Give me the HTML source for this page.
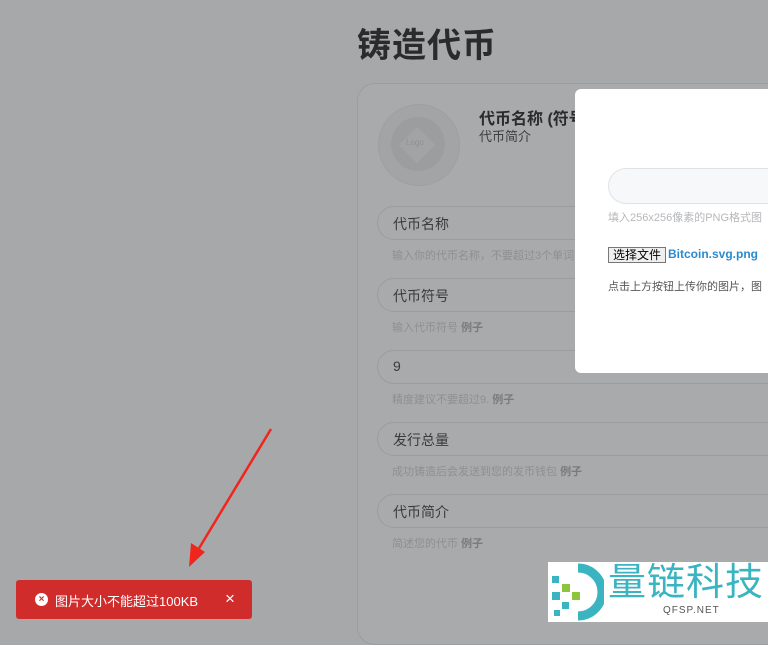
<!DOCTYPE html><html><head><meta charset="utf-8"><style>
body{margin:0;width:768px;height:622px;overflow:hidden;background:#a7a8aa;font-family:"Liberation Sans","Noto Sans CJK SC",sans-serif;position:relative}
.a{position:absolute}
h1{position:absolute;left:357px;top:18px;margin:0;font-size:34px;font-weight:bold;color:#2a2b2d;letter-spacing:1px}
.card{left:357px;top:83px;width:430px;height:560px;border:1px solid #9c9d9f;border-radius:18px;background:#a9aaac}
.inp{position:absolute;left:377px;width:420px;height:34px;border:1px solid #9b9c9e;border-radius:18px;background:#a9aaac;font-size:14px;color:#3a3b3d;box-sizing:border-box;padding:7px 15px}
.hint{position:absolute;left:392px;font-size:11px;color:#8e8f91}
.hint b{color:#7a7b7d}
.modal{left:575px;top:89px;width:200px;height:284px;background:#fff;border-radius:6px}
.toast{left:16px;top:580px;width:236px;height:39px;background:#d12c2c;border-radius:3px;color:#fff;font-size:13px}
</style></head><body>
<h1>铸造代币</h1>
<div class="a card"></div>
<div class="a" style="left:378px;top:104px;width:80px;height:80px;border-radius:50%;background:#a3a4a6;border:1px solid #9e9fa1"></div>
<div class="a" style="left:391px;top:117px;width:54px;height:54px;border-radius:50%;background:#9c9d9f"></div>
<div class="a" style="left:404px;top:132px;width:26px;height:26px;background:#a2a3a5;transform:rotate(45deg)"></div>
<div class="a" style="left:406px;top:138px;font-size:8px;color:#8f9092">Logo</div>
<div class="a" style="left:479px;top:105px;font-size:16px;font-weight:bold;color:#2a2b2d">代币名称 (符号)</div>
<div class="a" style="left:479px;top:126px;font-size:13px;color:#3e3f41">代币简介</div>
<div class="inp" style="top:206px">代币名称</div>
<div class="hint" style="top:247px">输入你的代币名称，不要超过3个单词</div>
<div class="inp" style="top:278px">代币符号</div>
<div class="hint" style="top:319px">输入代币符号 <b>例子</b></div>
<div class="inp" style="top:350px">9</div>
<div class="hint" style="top:391px">精度建议不要超过9. <b>例子</b></div>
<div class="inp" style="top:422px">发行总量</div>
<div class="hint" style="top:463px">成功铸造后会发送到您的发币钱包 <b>例子</b></div>
<div class="inp" style="top:494px">代币简介</div>
<div class="hint" style="top:535px">简述您的代币 <b>例子</b></div>
<div class="a modal"></div>
<div class="a" style="left:608px;top:168px;width:180px;height:34px;border:1px solid #dfe3e8;border-radius:18px;background:#f7f8fa"></div>
<div class="a" style="left:608px;top:209px;font-size:11px;color:#b5b7ba;white-space:nowrap">填入256x256像素的PNG格式图</div>
<div class="a" style="left:608px;top:247px;font-size:12px;border:1px solid #777;background:#efefef;padding:0 4px;line-height:14px">选择文件</div>
<div class="a" style="left:668px;top:247px;font-size:12px;font-weight:bold;color:#2a8ad0">Bitcoin.svg.png</div>
<div class="a" style="left:608px;top:278px;font-size:11px;color:#555;white-space:nowrap">点击上方按钮上传你的图片，图</div>
<svg class="a" style="left:185px;top:425px" width="90" height="145"><line x1="86" y1="4" x2="10" y2="130" stroke="#f0261e" stroke-width="2.5"/><polygon points="4,142 6,118 20,127" fill="#f0261e"/></svg>
<div class="a toast"><div class="a" style="left:19px;top:13px;width:13px;height:13px;border-radius:50%;background:#fff;color:#d12c2c;font-size:10px;font-weight:bold;text-align:center;line-height:13px">×</div><div class="a" style="left:39px;top:11px">图片大小不能超过100KB</div><div class="a" style="left:209px;top:9px;font-size:17px">×</div></div>
<div class="a" style="left:548px;top:562px;width:220px;height:60px;background:#fff"></div>
<svg class="a" style="left:548px;top:562px" width="56" height="60"><path d="M30 6 A24 24 0 1 1 30 54" fill="none" stroke="#3bb4c1" stroke-width="9"/><rect x="4" y="14" width="7" height="7" fill="#3bb4c1"/><rect x="14" y="22" width="8" height="8" fill="#8cc63f"/><rect x="4" y="30" width="8" height="8" fill="#3bb4c1"/><rect x="24" y="30" width="8" height="8" fill="#8cc63f"/><rect x="14" y="40" width="7" height="7" fill="#3bb4c1"/><rect x="6" y="48" width="6" height="6" fill="#3bb4c1"/></svg>
<div class="a" style="left:608px;top:561px;font-size:38px;color:#3bb4c1;letter-spacing:1px;line-height:44px">量链科技</div>
<div class="a" style="left:663px;top:605px;font-size:10px;color:#555;letter-spacing:1px">QFSP.NET</div>
</body></html>
